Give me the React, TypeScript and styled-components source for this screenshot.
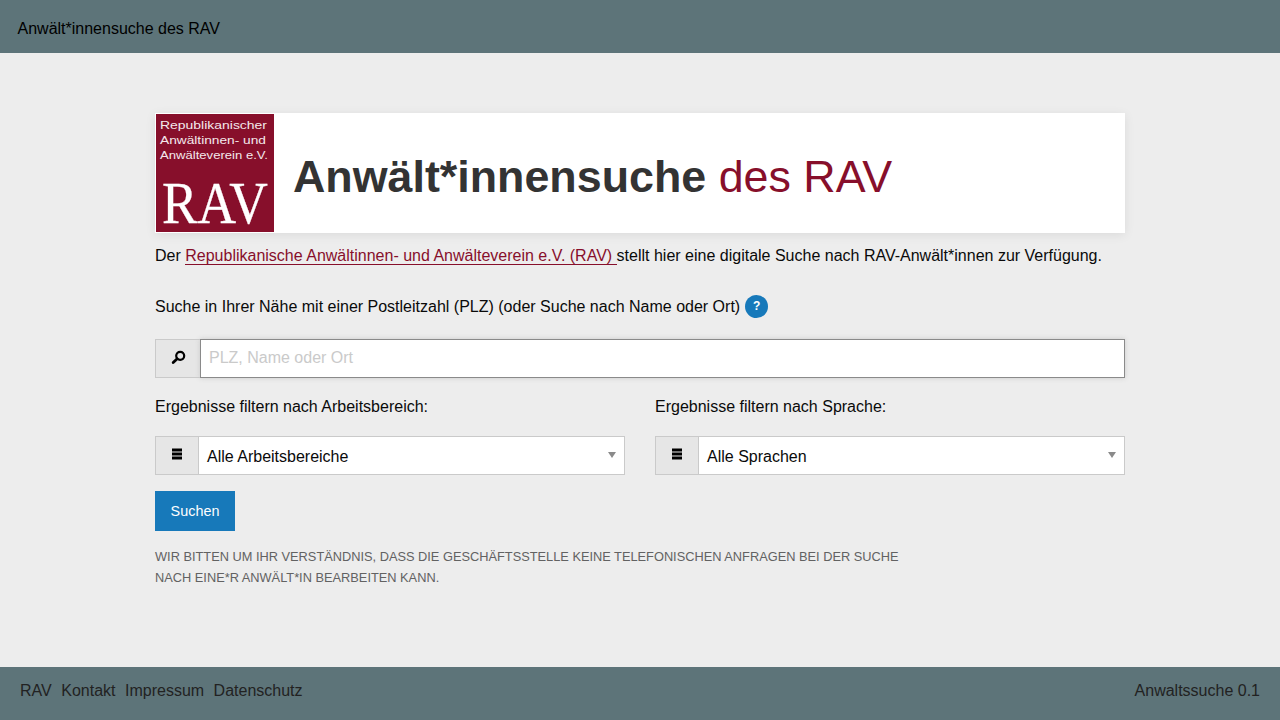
import React from "react";
import styled, { createGlobalStyle } from "styled-components";

const GlobalStyle = createGlobalStyle`
  html, body {
    margin: 0;
    padding: 0;
    height: 100%;
  }
  body {
    background: #ededed;
    color: #0a0a0a;
    font-family: "Liberation Sans", Arial, sans-serif;
    font-size: 16px;
  }
`;

const Page = styled.div`
  display: flex;
  flex-direction: column;
  height: 720px;
  overflow: hidden;
`;

const TopBar = styled.header`
  height: 53px;
  flex: none;
  display: flex;
  align-items: center;
  padding: 5px 0 0 17.5px;
  box-sizing: border-box;
  background: #5d7479;
  color: #000;
`;

const Main = styled.main`
  flex: 1;
  width: 970px;
  margin-left: 155px;
  padding-top: 60px;
  box-sizing: border-box;
`;

const Hero = styled.div`
  height: 120px;
  display: flex;
  align-items: center;
  background: #fff;
  box-shadow: 0 2px 10px rgba(0, 0, 0, 0.08);
  padding-left: 1px;
  box-sizing: border-box;
`;

const Logo = styled.svg`
  width: 118px;
  height: 118px;
  flex: none;
  display: block;
`;

const Title = styled.h1`
  margin: 6px 0 0 19px;
  font-size: 44.8px;
  line-height: 1;
  font-weight: 700;
  color: #333;
`;

const TitleAccent = styled.span`
  font-weight: 400;
  color: #870f2b;
`;

const Intro = styled.p`
  margin: 12px 0 0;
  line-height: 22px;
`;

const IntroLink = styled.a`
  color: #870f2b;
  text-decoration: none;
  border-bottom: 1px solid #870f2b;
`;

const SearchHint = styled.div`
  margin-top: 28px;
  height: 24px;
  display: flex;
  align-items: center;
  gap: 5px;
`;

const HelpBadge = styled.span`
  width: 23px;
  height: 23px;
  margin-top: -2px;
  border-radius: 50%;
  background: #1779ba;
  color: #fff;
  font-size: 12px;
  font-weight: 700;
  display: flex;
  align-items: center;
  justify-content: center;
`;

const InputGroup = styled.div<{ $top: number }>`
  display: flex;
  height: 39px;
  margin-top: ${(p) => p.$top}px;
`;

const GroupLabel = styled.span<{ $width: number }>`
  width: ${(p) => p.$width}px;
  flex: none;
  box-sizing: border-box;
  display: flex;
  align-items: center;
  justify-content: center;
  background: #e6e6e6;
  border: 1px solid #cacaca;
  border-right: 0;
  color: #000;
`;

const SearchInput = styled.input`
  flex: 1;
  min-width: 0;
  box-sizing: border-box;
  border: 1px solid #8a8a8a;
  box-shadow: 0 0 5px #cacaca;
  background: #fff;
  padding: 0 8px 2px;
  margin: 0;
  font: inherit;
  outline: none;
  &::placeholder {
    color: #cacaca;
    opacity: 1;
  }
`;

const FilterRow = styled.div`
  display: grid;
  grid-template-columns: 470px 470px;
  column-gap: 30px;
  margin-top: 19px;
`;

const FilterLabel = styled.div`
  line-height: 20px;
`;

const SelectBox = styled.div`
  flex: 1;
  position: relative;
  box-sizing: border-box;
  border: 1px solid #cacaca;
  background: #fff;
  padding: 3px 8px 0;
  display: flex;
  align-items: center;
  color: #0a0a0a;
`;

const Caret = styled.span`
  position: absolute;
  right: 8px;
  top: 15px;
  width: 0;
  height: 0;
  border-style: solid;
  border-width: 6px 4.5px 0;
  border-color: #8a8a8a transparent transparent;
`;

const SubmitButton = styled.button`
  display: block;
  width: 80px;
  height: 40px;
  margin: 16px 0 0;
  padding: 0;
  border: 0;
  background: #1779ba;
  color: #fefefe;
  font: inherit;
  font-size: 14.4px;
`;

const Notice = styled.p`
  width: 780px;
  margin: 15px 0 0;
  font-size: 12.8px;
  line-height: 21px;
  color: #626262;
  text-transform: uppercase;
`;

const Footer = styled.footer`
  height: 53px;
  flex: none;
  display: flex;
  align-items: center;
  justify-content: space-between;
  padding: 0 20px 6px;
  box-sizing: border-box;
  background: #5d7479;
  color: #222;
`;

const FooterNav = styled.nav`
  display: flex;
  gap: 9.5px;
`;

const FooterLink = styled.a`
  color: inherit;
  text-decoration: none;
`;

const IconHolder = styled.svg<{ $shift: number }>`
  display: block;
  margin-top: ${(p) => p.$shift}px;
`;

const SearchIcon = () => (
  <IconHolder $shift={-2} width="15" height="15" viewBox="0 0 15 15">
    <circle cx="9.2" cy="5.8" r="4" fill="none" stroke="#000" strokeWidth="2.2" />
    <path d="M6.2 8.8 2.2 12.6" stroke="#000" strokeWidth="2.8" strokeLinecap="round" />
  </IconHolder>
);

const ListIcon = () => (
  <IconHolder $shift={-3} width="12" height="12" viewBox="0 0 12 12">
    <path d="M1 .5h10v3H1zM1 4.5h10v3H1zM1 8.5h10v3H1z" fill="#000" />
  </IconHolder>
);

const RavLogo = () => (
  <Logo viewBox="0 0 118 118">
    <rect width="118" height="118" fill="#870f2b" />
    <g fill="#f4e9eb" fontFamily="'Liberation Sans', Arial, sans-serif" fontSize="11.4">
      <text x="4" y="14.5" textLength="107" lengthAdjust="spacingAndGlyphs">
        Republikanischer
      </text>
      <text x="4" y="30" textLength="106" lengthAdjust="spacingAndGlyphs">
        Anwältinnen- und
      </text>
      <text x="4" y="45" textLength="108" lengthAdjust="spacingAndGlyphs">
        Anwälteverein e.V.
      </text>
    </g>
    <text
      transform="translate(6 109) scale(0.89 1)"
      fill="#fff"
      stroke="#fff"
      strokeWidth="0.3"
      fontFamily="'Liberation Serif', 'Times New Roman', serif"
      fontSize="60"
    >
      RAV
    </text>
  </Logo>
);

const App: React.FC = () => {
  return (
    <Page>
      <GlobalStyle />
      <TopBar>Anwält*innensuche des RAV</TopBar>
      <Main>
        <Hero>
          <RavLogo />
          <Title>
            Anwält*innensuche <TitleAccent>des RAV</TitleAccent>
          </Title>
        </Hero>
        <Intro>
          Der{" "}
          <IntroLink href="#">
            Republikanische Anwältinnen- und Anwälteverein e.V. (RAV){" "}
          </IntroLink>
          stellt hier eine digitale Suche nach RAV-Anwält*innen zur Verfügung.
        </Intro>
        <SearchHint>
          Suche in Ihrer Nähe mit einer Postleitzahl (PLZ) (oder Suche nach Name oder Ort)
          <HelpBadge>?</HelpBadge>
        </SearchHint>
        <InputGroup $top={20}>
          <GroupLabel $width={45}>
            <SearchIcon />
          </GroupLabel>
          <SearchInput placeholder="PLZ, Name oder Ort" />
        </InputGroup>
        <FilterRow>
          <div>
            <FilterLabel>Ergebnisse filtern nach Arbeitsbereich:</FilterLabel>
            <InputGroup $top={19}>
              <GroupLabel $width={43}>
                <ListIcon />
              </GroupLabel>
              <SelectBox>
                Alle Arbeitsbereiche
                <Caret />
              </SelectBox>
            </InputGroup>
          </div>
          <div>
            <FilterLabel>Ergebnisse filtern nach Sprache:</FilterLabel>
            <InputGroup $top={19}>
              <GroupLabel $width={43}>
                <ListIcon />
              </GroupLabel>
              <SelectBox>
                Alle Sprachen
                <Caret />
              </SelectBox>
            </InputGroup>
          </div>
        </FilterRow>
        <SubmitButton>Suchen</SubmitButton>
        <Notice>
          Wir bitten um Ihr Verständnis, dass die Geschäftsstelle keine telefonischen Anfragen bei
          der Suche nach eine*r Anwält*in bearbeiten kann.
        </Notice>
      </Main>
      <Footer>
        <FooterNav>
          <FooterLink href="#">RAV</FooterLink>
          <FooterLink href="#">Kontakt</FooterLink>
          <FooterLink href="#">Impressum</FooterLink>
          <FooterLink href="#">Datenschutz</FooterLink>
        </FooterNav>
        <span>Anwaltssuche 0.1</span>
      </Footer>
    </Page>
  );
};

export default App;
